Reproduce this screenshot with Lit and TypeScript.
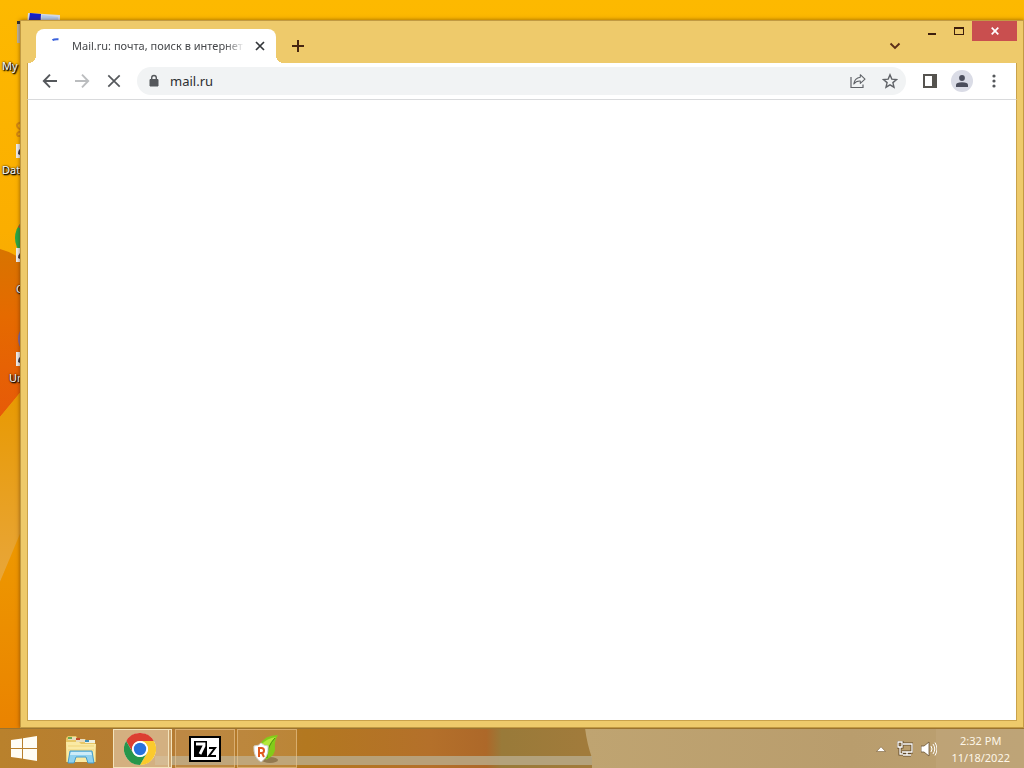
import { LitElement, html, css, svg } from "lit";
import { customElement } from "lit/decorators.js";

const wallpaper = svg`
  <defs>
    <linearGradient id="sky" x1="0" y1="0" x2="0" y2="1">
      <stop offset="0" stop-color="#fdb900"/><stop offset=".3" stop-color="#fbae00"/>
      <stop offset=".6" stop-color="#e9a012"/><stop offset="1" stop-color="#ec8a00"/>
    </linearGradient>
    <linearGradient id="petal" x1="0" y1="0" x2="0" y2="1">
      <stop offset="0" stop-color="#d87400"/><stop offset=".4" stop-color="#e56a00"/><stop offset="1" stop-color="#e75a08"/>
    </linearGradient>
    <linearGradient id="ray" x1="0" y1="0" x2="0" y2="1">
      <stop offset="0" stop-color="#e89900"/><stop offset="1" stop-color="#e8a63a"/>
    </linearGradient>
    <linearGradient id="glow" x1="0" y1="0" x2="0" y2="1">
      <stop offset="0" stop-color="#ee9a00"/><stop offset="1" stop-color="#ea8300"/>
    </linearGradient>
  </defs>
  <rect width="1024" height="768" fill="url(#sky)"/>
  <path d="M0 249Q12 252 24 261V388L0 417Z" fill="url(#petal)"/>
  <path d="M0 417L24 388V528L0 582Z" fill="url(#ray)"/>
  <path d="M0 582L24 524V728H0Z" fill="url(#glow)"/>`;

@customElement("desktop-icons")
class DesktopIcons extends LitElement {
  static styles = css`
    :host { display: flex; flex-direction: column; width: 76px; }
    .item { height: 104px; display: flex; flex-direction: column; }
    .art { display: block; width: 76px; height: 56px; flex: none; }
    .label { font-size: 11px; line-height: 15px; padding: 2px 0 0 2px; color: #fff;
      text-shadow: 1px 1px 2px #000, 0 0 2px #000, 1px 1px 1px #000; }
    .mid { padding-left: 9px; }
    .low { padding: 17px 0 0 16px; }
  `;
  render() {
    const arrow = svg`<path d="M16 40h10v14H16z" fill="#eee"/><path d="M18 50q0-5 4-6v8z" fill="#334"/>`;
    return html`
      <div class="item">
        <svg class="art" viewBox="0 0 76 56"><path d="M17 21h5v22h-5z" fill="#bdb6a0"/><path d="M17 21h4v3h-4z" fill="#333"/><path d="M28 13l32 2v24H26z" fill="#d5dae5"/><path d="M30 13l11 1-1 18H27z" fill="#1420c8"/><path d="M42 15l16 2v18H40z" fill="#b5cbed"/></svg>
        <span class="label">My</span>
      </div>
      <div class="item">
        <svg class="art" viewBox="0 0 76 56"><path d="M28 18q-12 0-11 4t9 4q-12 2-8 6h9" fill="none" stroke="#d58b12" stroke-width="2"/>${arrow}</svg>
        <span class="label">Dat</span>
      </div>
      <div class="item">
        <svg class="art" viewBox="0 0 76 56"><circle cx="38" cy="30" r="23" fill="#28a745"/><path d="M18 19q6-9 20-12v23z" fill="#d04a2a"/>${arrow}</svg>
        <span class="label low">C</span>
      </div>
      <div class="item">
        <svg class="art" viewBox="0 0 76 56"><circle cx="35" cy="27" r="17" fill="#7d6aa8"/>${arrow}</svg>
        <span class="label mid">Un</span>
      </div>`;
  }
}

@customElement("browser-window")
class BrowserWindow extends LitElement {
  static styles = css`
    :host { display: flex; flex-direction: column; box-sizing: border-box; padding: 0 6px 6px;
      background: #eeca6b; border: 1px solid #c29a43; box-shadow: 0 0 4px rgba(80, 40, 0, .6); }
    button { font: inherit; border: 0; padding: 0; margin: 0; background: none; display: flex;
      align-items: center; justify-content: center; flex: none; }
    svg { display: block; }
    .titlebar { height: 42px; flex: none; display: flex; padding-left: 9px; }
    .tab { position: relative; width: 240px; height: 34px; margin-top: 8px; box-sizing: border-box; flex: none;
      display: flex; align-items: center; padding: 0 8px 0 12px; background: #fff; border-radius: 8px 8px 0 0; }
    .tab::before, .tab::after { content: ""; position: absolute; bottom: 0; width: 8px; height: 8px; }
    .tab::before { left: -8px; background: radial-gradient(circle at 0 0, transparent 8px, #fff 8px); }
    .tab::after { right: -8px; background: radial-gradient(circle at 100% 0, transparent 8px, #fff 8px); }
    .spinner { width: 16px; height: 16px; margin-right: 8px; flex: none; }
    .title { flex: 1; font-size: 11px; line-height: 16px; color: #45474a; white-space: nowrap;
      -webkit-mask-image: linear-gradient(to right, #000 88%, transparent); mask-image: linear-gradient(to right, #000 88%, transparent); }
    .tab button { width: 16px; height: 16px; margin-left: 7px; }
    .new { width: 28px; height: 28px; margin: 11px 0 0 8px; }
    .fill { flex: 1; }
    .search { width: 28px; height: 28px; margin: 11px 9px 0 0; }
    .controls { display: flex; align-items: flex-start; }
    .controls button { width: 27px; height: 20px; }
    .controls .close { width: 45px; background: #c94f4f; }
    .toolbar { height: 37px; flex: none; box-sizing: border-box; display: flex; align-items: center; gap: 4px;
      padding: 0 8px; background: #fff; border: 1px solid #c9a24b; border-width: 0 1px; border-bottom: 1px solid #d9dadc; }
    .toolbar button { width: 28px; height: 28px; }
    .omnibox { flex: 1; height: 28px; margin: 0 6px 0 5px; border-radius: 14px; background: #f1f3f4;
      display: flex; align-items: center; gap: 4px; padding: 0 2px 0 11px; }
    .omnibox input { flex: 1; min-width: 0; border: 0; outline: 0; padding: 0 0 0 6px; background: none;
      font: 13px/20px "Noto Sans", "Open Sans", sans-serif; color: #2c2e31; }
    .toolbar .avatar { width: 22px; height: 22px; margin: 0 3px; border-radius: 50%; background: #dadce6; }
    .page { flex: 1; background: #fff; border: 1px solid #c9a24b; border-top: 0; }
  `;
  render() {
    return html`
      <div class="titlebar">
        <div class="tab">
          <svg class="spinner" viewBox="0 0 16 16"><path d="M4.500 2.300Q6 1 10.500 1.300" fill="none" stroke="#3b62dc" stroke-width="2"/></svg>
          <span class="title">Mail.ru: почта, поиск в интернет</span>
          <button aria-label="Close tab"><svg width="16" height="16" viewBox="0 0 16 16"><path d="M4 4l8 8M12 4l-8 8" stroke="#33363a" stroke-width="1.7"/></svg></button>
        </div>
        <button class="new" aria-label="New tab"><svg width="14" height="14" viewBox="0 0 14 14"><path d="M7 1v12M1 7h12" stroke="#472611" stroke-width="2"/></svg></button>
        <span class="fill"></span>
        <button class="search" aria-label="Search tabs"><svg width="12" height="12" viewBox="0 0 12 12"><path d="M1.500 3.500L6 8l4.500-4.500" fill="none" stroke="#5c2e17" stroke-width="1.900"/></svg></button>
        <div class="controls">
          <button aria-label="Minimize"><svg width="10" height="10" viewBox="0 0 10 10"><path d="M1 7h8v2H1z" fill="#3d1e0d"/></svg></button>
          <button aria-label="Maximize"><svg width="10" height="8" viewBox="0 0 10 8"><path d="M0 0h10v8H0zM1 2v5h8V2z" fill="#3d1e0d" fill-rule="evenodd"/></svg></button>
          <button class="close" aria-label="Close"><svg width="8" height="8" viewBox="0 0 8 8"><path d="M.7.7l6.600 6.600M7.300.7L.7 7.300" stroke="#fff" stroke-width="1.700"/></svg></button>
        </div>
      </div>
      <div class="toolbar">
        <button aria-label="Back"><svg width="16" height="16" viewBox="0 0 16 16"><path d="M15 8H2.500M8 1.700L1.800 8 8 14.300" fill="none" stroke="#55585c" stroke-width="1.900"/></svg></button>
        <button aria-label="Forward" disabled><svg width="16" height="16" viewBox="0 0 16 16"><path d="M1 8h12.500M8 1.700L14.200 8 8 14.300" fill="none" stroke="#bbbdbf" stroke-width="1.900"/></svg></button>
        <button aria-label="Stop"><svg width="14" height="14" viewBox="0 0 14 14"><path d="M1.300 1.300l11.400 11.400M12.700 1.300L1.300 12.700" stroke="#55585c" stroke-width="1.700"/></svg></button>
        <div class="omnibox">
          <svg width="12" height="14" viewBox="0 0 12 14"><path d="M2 5.500h8v6.500H2z" fill="#55585c" stroke="#55585c" stroke-linejoin="round"/><path d="M3.700 5V3.800a2.300 2.300 0 0 1 4.600 0V5" fill="none" stroke="#55585c" stroke-width="1.400"/></svg>
          <input aria-label="Address" value="mail.ru">
          <button aria-label="Share"><svg width="16" height="16" viewBox="0 0 16 16"><path d="M1 4v10.500h12V11.500" fill="none" stroke="#606368" stroke-width="1.200"/><path d="M10.300 1.700L15 6.100l-4.700 4.200V8q-4.200-.3-6.500 3 .7-6 6.500-6.800z" fill="none" stroke="#606368" stroke-width="1.100" stroke-linejoin="round"/></svg></button>
          <button aria-label="Bookmark"><svg width="16" height="16" viewBox="0 0 16 16"><path d="M8 1.800l1.800 4.300 4.700.4-3.600 3.100 1.100 4.600L8 11.800l-4 2.400 1.100-4.600-3.600-3.100 4.700-.4z" fill="none" stroke="#606368" stroke-width="1.400"/></svg></button>
        </div>
        <button aria-label="Side panel"><svg width="14" height="14" viewBox="0 0 14 14"><path d="M0 0h14v14H0zM2 2v10h7V2z" fill="#55534f" fill-rule="evenodd"/></svg></button>
        <button class="avatar" aria-label="Profile"><svg width="12" height="12" viewBox="0 0 12 12"><circle cx="6" cy="3" r="2.900" fill="#4b4e5c"/><path d="M0 12V10Q0 7.200 6 7.200T12 10v2z" fill="#4b4e5c"/></svg></button>
        <button aria-label="Menu"><svg width="4" height="14" viewBox="0 0 4 14"><g fill="#55585c"><circle cx="2" cy="2" r="1.600"/><circle cx="2" cy="7" r="1.600"/><circle cx="2" cy="12" r="1.600"/></g></svg></button>
      </div>
      <main class="page"></main>`;
  }
}

@customElement("task-bar")
class TaskBar extends LitElement {
  static styles = css`
    :host { position: relative; display: flex; align-items: stretch; box-sizing: border-box; padding-top: 1px;
      background: #b67d26; color: #fff; overflow: hidden; }
    .backdrop { position: absolute; inset: 0; width: 100%; height: 100%; }
    button { position: relative; font: inherit; border: 0; padding: 0; background: none; display: flex;
      align-items: center; justify-content: center; flex: none; box-sizing: border-box; }
    svg { display: block; }
    .start { width: 48px; }
    .pin { width: 65px; }
    .app { width: 60px; margin-right: 2px; border: 1px solid rgba(240, 205, 155, .55); background: rgba(220, 180, 130, .22); }
    .app.sz { padding-right: 1px; }
    .app.active { width: 59px; margin-right: 3px; padding-right: 6px; border: 1px solid #f3e3bc; background: rgba(222, 194, 155, .75);
      box-shadow: inset -2px 0 #c9a06a, inset -3px 0 #f3e3bc; }
    .app.last { padding-right: 3px; }
    .fill { flex: 1; }
    .tray { position: relative; display: flex; align-items: center; gap: 8px; padding-right: 14px; }
    .tray button { width: 16px; height: 16px; }
    time { margin-left: 6px; font-size: 11px; line-height: 17px; text-align: center; padding-top: 1px; color: #fdf6e8; }
    time span { display: block; }
  `;
  render() {
    return html`
      <svg class="backdrop" viewBox="0 0 1024 40" preserveAspectRatio="none">
        <defs>
          <linearGradient id="bar" gradientUnits="userSpaceOnUse" x1="0" y1="0" x2="1024" y2="0"><stop offset="0" stop-color="#b9812c"/><stop offset=".16" stop-color="#b57c35"/><stop offset=".3" stop-color="#b37820"/><stop offset=".42" stop-color="#b4702a"/><stop offset=".475" stop-color="#ad6829"/><stop offset=".49" stop-color="#997a39"/><stop offset=".57" stop-color="#a17b3b"/></linearGradient>
          <linearGradient id="pale"><stop offset="0" stop-color="#bfa471"/><stop offset=".6" stop-color="#b99d6d"/><stop offset="1" stop-color="#bba071"/></linearGradient>
        </defs>
        <rect width="1024" height="40" fill="url(#bar)"/>
        <path d="M585 0H1024V40H592V30Q587 16 585 0z" fill="url(#pale)"/>
        <path d="M936 0h88v40h-88z" fill="#c1a77d" opacity=".5"/>
        <path d="M155 28H592V37H155z" fill="#b9ad8d" opacity=".8"/>
        <path d="M0 0h1024v1H0z" fill="#9a7330"/>
      </svg>
      <button class="start" aria-label="Start"><svg width="28" height="26" viewBox="0 0 28 26"><path d="M1 4l11-1.600V12H1zM13 2.200L27 0v12H13zM1 13h11v9.600L1 21zM13 13h14v12L13 22.800z" fill="#fffdf5"/></svg></button>
      <button class="pin" aria-label="File Explorer"><svg width="32" height="32" viewBox="0 0 32 32">
        <path d="M1 5l2-2h8l2 3h7l2 2h8l1 21H1z" fill="#e7c766"/><path d="M3 4h8v3H3z" fill="#e9ddbd"/><path d="M3 4h4v2H3z" fill="#6dab50"/><path d="M11 6h9v3h-9z" fill="#e9ddbd"/><path d="M11 5h4v2h-4z" fill="#c44c2a"/><path d="M20 7h10v3H20z" fill="#eff0df"/><path d="M20 7h4v2h-4z" fill="#3b8fb8"/>
        <path d="M1 9h13l2 2h15l-1 18H2z" fill="#faeaa4"/><path d="M3 13h26M3 17h26" stroke="#efd47b"/>
        <path d="M5 18h22l2 12h-6l-2-6H11l-2 6H3z" fill="#8fd1ef" stroke="#469cc8"/><path d="M6 19h20l1 3H5z" fill="#cdecf8"/></svg></button>
      <button class="app active" aria-label="Google Chrome"><svg width="32" height="32" viewBox="0 0 32 32">
        <circle cx="16" cy="16" r="16" fill="#fff"/>
        <path d="M2.140 8A16 16 0 0 1 29.860 8H16a8 8 0 0 0-6.930 12z" fill="#dc3e31"/>
        <path d="M29.860 8A16 16 0 0 1 16 32L22.930 20A8 8 0 0 0 16 8z" fill="#fbca2d"/>
        <path d="M16 32A16 16 0 0 1 2.140 8L9.070 20A8 8 0 0 0 22.930 20z" fill="#27964b"/>
        <circle cx="16" cy="16" r="7.800" fill="#fff"/><circle cx="16" cy="16" r="6.200" fill="#2872dc"/></svg></button>
      <button class="app sz" aria-label="7-Zip"><svg width="32" height="26" viewBox="0 0 32 26">
        <path d="M0 0h32v26H0z" fill="#000"/><path d="M2 2h28v22H2z" fill="#fff"/><path d="M5 5h13v16H5z" fill="#000"/>
        <path d="M7 8h8v2l-4 8" fill="none" stroke="#fff" stroke-width="2.800"/><path d="M20 12h6l-6 8h7" fill="none" stroke="#000" stroke-width="2"/></svg></button>
      <button class="app last" aria-label="Revo Uninstaller"><svg width="26" height="32" viewBox="0 0 26 32">
        <ellipse cx="17" cy="27" rx="8" ry="3" fill="#6e542e" opacity=".55"/>
        <path d="M7 12Q11 2 25 2 21 8 22 15T13 27Z" fill="#83cb19"/><path d="M8 12Q14 5 23 4 15 9 14 25" fill="#b3e83b"/><path d="M22 5Q14 13 14 25" fill="none" stroke="#4a950d"/>
        <path d="M1 13q5 0 7-3 3 3 7 3 1 11-7 16Q0 24 1 13z" fill="#fff" stroke="#d1d1cd"/>
        <path d="M6 24v-9h2.500a2.400 2.400 0 0 1 0 5H6m3 0l2 4" fill="none" stroke="#df5a20" stroke-width="2"/></svg></button>
      <span class="fill"></span>
      <div class="tray">
        <button aria-label="Show hidden icons"><svg width="10" height="6" viewBox="0 0 10 6"><path d="M.5 5.500L5 .8l4.500 4.700z" fill="#fff" stroke="#79603c" stroke-width=".6"/></svg></button>
        <button aria-label="Network"><svg width="16" height="16" viewBox="0 0 16 16"><g fill="none"><path d="M6 3h9v8H5M10 11v3M6 14h8M3 6v7h3M1 1h4v5H1z" stroke="#624b2b" stroke-width="3"/><path d="M6 3h9v8H5M10 11v3M6 14h8M3 6v7h3M1 1h4v5H1z" stroke="#fff" stroke-width="1.300"/></g></svg></button>
        <button aria-label="Volume"><svg width="16" height="16" viewBox="0 0 16 16"><path d="M0 5h3l5-4v14l-5-4H0z" fill="#fff" stroke="#675234" stroke-width=".8"/><path d="M10 5q2 3 0 6M12 3q3.500 5 0 10M14 1.500q4 6.500 0 13" fill="none" stroke="#fff" stroke-width="1"/></svg></button>
        <time datetime="2022-11-18T14:32"><span>2:32 PM</span><span>11/18/2022</span></time>
      </div>`;
  }
}

@customElement("app-root")
class AppRoot extends LitElement {
  static styles = css`
    :host { position: relative; display: grid; grid-template-rows: 1fr 40px; height: 100vh; overflow: hidden;
      background: #fdb900; font-family: "Noto Sans", "Open Sans", sans-serif; }
    .wallpaper { position: absolute; inset: 0; width: 100%; height: 100%; }
    .desktop { position: relative; min-height: 0; }
    desktop-icons { position: relative; }
    browser-window { position: absolute; inset: 20px 0 0 20px; }
  `;
  render() {
    return html`
      <svg class="wallpaper" viewBox="0 0 1024 768" preserveAspectRatio="none">${wallpaper}</svg>
      <div class="desktop">
        <desktop-icons></desktop-icons>
        <browser-window></browser-window>
      </div>
      <task-bar></task-bar>`;
  }
}
